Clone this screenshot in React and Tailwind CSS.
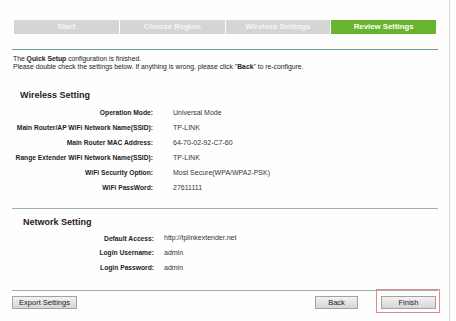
import React from "react";

const wireless = [
  ["Operation Mode:", "Universal Mode"],
  ["Main Router/AP WiFi Network Name(SSID):", "TP-LINK"],
  ["Main Router MAC Address:", "64-70-02-92-C7-60"],
  ["Range Extender WiFi Network Name(SSID):", "TP-LINK"],
  ["WiFi Security Option:", "Most Secure(WPA/WPA2-PSK)"],
  ["WiFi PassWord:", "27611111"],
];

const network = [
  ["Default Access:", "http://tplinkextender.net"],
  ["Login Username:", "admin"],
  ["Login Password:", "admin"],
];

const tabs = ["Start", "Choose Region", "Wireless Settings", "Review Settings"];

function Btn({ children, className }) {
  return (
    <div
      className={
        "h-[13px] flex items-center justify-center border border-[#a3a3a3] bg-gradient-to-b from-[#f2f2f2] to-[#d6d6d6] text-[7.5px] text-[#222] " +
        className
      }
    >
      {children}
    </div>
  );
}

export default function App() {
  return (
    <div className="relative w-[456px] h-[321px] overflow-hidden bg-white font-['Liberation_Sans',Arial,sans-serif]">
      <div className="w-[450px] h-full border-r border-[#d6d6d6] bg-[#fefefe] pl-[12px] pt-[20px] flex flex-col">
        {/* tabs */}
        <div className="ml-[2px] w-[422px] h-[14px] flex gap-px">
          {tabs.map((t, i) => (
            <div
              key={t}
              className={
                "flex-1 flex items-center justify-center font-bold text-[7.8px] " +
                (i === 3 ? "bg-[#69b42e] text-white" : "bg-[#d5d5d5] text-[#f6f6f6]")
              }
            >
              {t}
            </div>
          ))}
        </div>
        <div className="mt-[15px] w-[426px] h-px bg-[#6f9f88]" />
        <div className="mt-[5px] text-[6.8px] leading-[7.5px] text-[#222] pl-px">
          <div>
            The <b>Quick Setup</b> configuration is finished.
          </div>
          <div>
            Please double check the settings below. If anything is wrong, please click "<b>Back</b>" to re-configure.
          </div>
        </div>

        <div className="mt-[20px] pl-[8px] h-[12px] flex items-center font-bold text-[9px] text-[#222]">
          Wireless Setting
        </div>
        <div className="mt-[4px] flex flex-col">
          {wireless.map(([k, v]) => (
            <div key={k} className="h-[14.9px] flex items-center">
              <div className="w-[141px] text-right font-bold text-[6.7px] text-[#222] whitespace-nowrap">{k}</div>
              <div className="ml-[20px] text-[7px] text-[#333] whitespace-nowrap">{v}</div>
            </div>
          ))}
        </div>

        <div className="mt-[13px] w-[426px] h-px bg-[#9bb3a6]" />
        <div className="mt-[7px] pl-[11px] h-[12px] flex items-center font-bold text-[9px] text-[#222]">
          Network Setting
        </div>
        <div className="mt-[3px] flex flex-col">
          {network.map(([k, v]) => (
            <div key={k} className="h-[14.6px] flex items-center">
              <div className="w-[142px] text-right font-bold text-[6.7px] text-[#222] whitespace-nowrap">{k}</div>
              <div className="ml-[10px] text-[7px] text-[#333] whitespace-nowrap">{v}</div>
            </div>
          ))}
        </div>

        <div className="mt-[15px] w-[426px] h-px bg-[#9bb3a6]" />
        <div className="mt-[5px] w-[426px] flex items-center">
          <Btn className="w-[65px]">Export Settings</Btn>
          <div className="flex-1" />
          <Btn className="w-[43px]">Back</Btn>
          <Btn className="w-[55px] ml-[23px] mr-[2px]">Finish</Btn>
        </div>
      </div>
      {/* red highlight annotation */}
      <div className="absolute left-[376px] top-[289px] w-[64px] h-[24px] border border-[#e58a8a]" />
    </div>
  );
}
